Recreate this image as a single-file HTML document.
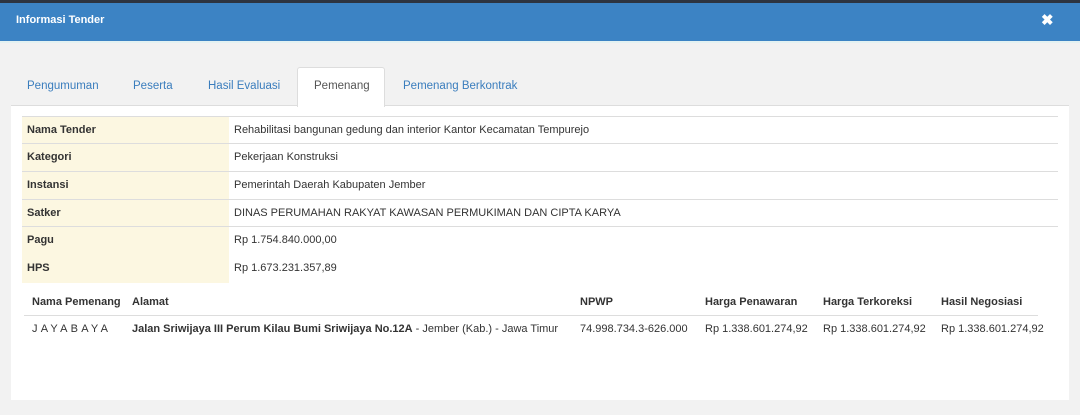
<!DOCTYPE html>
<html><head><style>
*{margin:0;padding:0;box-sizing:border-box}
body{width:1080px;height:415px;background:#f2f2f2;font-family:"Liberation Sans",sans-serif;font-size:11px;color:#333;position:relative;overflow:hidden}
.a{position:absolute;white-space:nowrap}
.b{font-weight:bold}
</style></head><body>
<div class="a" style="left:0;top:0;width:1080px;height:3px;background:#2d3440"></div>
<div class="a" style="left:0;top:3px;width:1080px;height:38px;background:#3c83c4"></div>
<div class="a" style="left:0;top:41px;width:1080px;height:2px;background:#e4f2f2"></div>
<div class="a b" style="left:16px;top:14px;color:#fff;font-size:11px">Informasi Tender</div>
<div class="a b" style="left:1041px;top:11px;color:#fff;font-size:15px">✖</div>

<div class="a" style="left:11px;top:105px;width:1058px;height:295px;background:#fff;border-top:1px solid #ddd"></div>
<div class="a" style="left:297px;top:67px;width:88px;height:40px;background:#fff;border:1px solid #ddd;border-bottom:none;border-radius:3px 3px 0 0"></div>
<div class="a" style="left:27px;top:80px;color:#3a7dbd;font-size:11.5px">Pengumuman</div>
<div class="a" style="left:133px;top:80px;color:#3a7dbd;font-size:11.5px">Peserta</div>
<div class="a" style="left:208px;top:80px;color:#3a7dbd;font-size:11.5px">Hasil Evaluasi</div>
<div class="a" style="left:314px;top:80px;color:#555;font-size:11.5px">Pemenang</div>
<div class="a" style="left:403px;top:80px;color:#3a7dbd;font-size:11.5px">Pemenang Berkontrak</div>

<div class="a" style="left:22px;top:116px;width:207px;height:167px;background:#fcf7e1"></div>
<div class="a" style="left:22px;top:116px;width:1036px;height:1px;background:#ddd"></div>
<div class="a" style="left:22px;top:143px;width:1036px;height:1px;background:#ddd"></div>
<div class="a" style="left:22px;top:171px;width:1036px;height:1px;background:#ddd"></div>
<div class="a" style="left:22px;top:199px;width:1036px;height:1px;background:#ddd"></div>
<div class="a" style="left:22px;top:226px;width:1036px;height:1px;background:#ddd"></div>

<div class="a b" style="left:27px;top:124px">Nama Tender</div>
<div class="a" style="left:234px;top:124px">Rehabilitasi bangunan gedung dan interior Kantor Kecamatan Tempurejo</div>
<div class="a b" style="left:27px;top:151px">Kategori</div>
<div class="a" style="left:234px;top:151px">Pekerjaan Konstruksi</div>
<div class="a b" style="left:27px;top:179px">Instansi</div>
<div class="a" style="left:234px;top:179px">Pemerintah Daerah Kabupaten Jember</div>
<div class="a b" style="left:27px;top:207px">Satker</div>
<div class="a" style="left:234px;top:207px">DINAS PERUMAHAN RAKYAT KAWASAN PERMUKIMAN DAN CIPTA KARYA</div>
<div class="a b" style="left:27px;top:234px">Pagu</div>
<div class="a" style="left:234px;top:234px">Rp 1.754.840.000,00</div>
<div class="a b" style="left:27px;top:262px">HPS</div>
<div class="a" style="left:234px;top:262px">Rp 1.673.231.357,89</div>

<div class="a" style="left:24px;top:315px;width:1014px;height:1px;background:#ddd"></div>
<div class="a b" style="left:32px;top:296px">Nama Pemenang</div>
<div class="a b" style="left:132px;top:296px">Alamat</div>
<div class="a b" style="left:580px;top:296px">NPWP</div>
<div class="a b" style="left:705px;top:296px">Harga Penawaran</div>
<div class="a b" style="left:823px;top:296px">Harga Terkoreksi</div>
<div class="a b" style="left:941px;top:296px">Hasil Negosiasi</div>
<div class="a" style="left:32px;top:323px;letter-spacing:3.2px">JAYABAYA</div>
<div class="a" style="left:132px;top:323px"><b>Jalan Sriwijaya III Perum Kilau Bumi Sriwijaya No.12A</b> - Jember (Kab.) - Jawa Timur</div>
<div class="a" style="left:580px;top:323px">74.998.734.3-626.000</div>
<div class="a" style="left:705px;top:323px">Rp 1.338.601.274,92</div>
<div class="a" style="left:823px;top:323px">Rp 1.338.601.274,92</div>
<div class="a" style="left:941px;top:323px">Rp 1.338.601.274,92</div>
</body></html>
